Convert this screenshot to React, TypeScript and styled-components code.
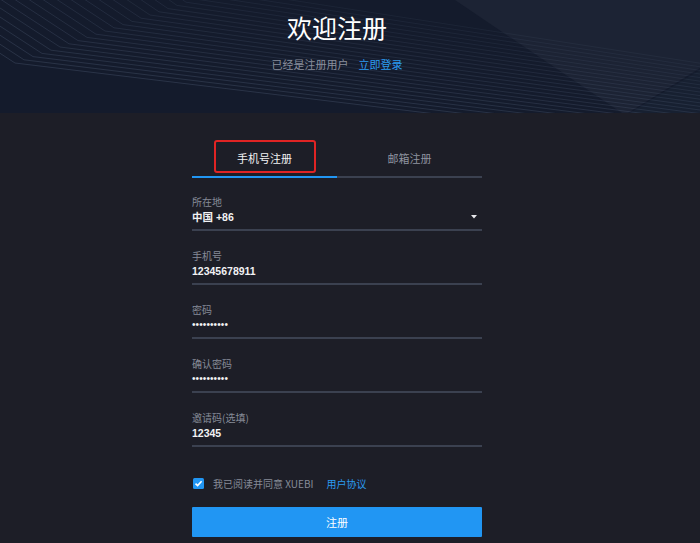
import { FC } from "react";
import styled, { createGlobalStyle } from "styled-components";

const GlobalStyle = createGlobalStyle`
  html, body {
    margin: 0;
    padding: 0;
    background: #1d1e27;
  }
  body {
    font-family: "Noto Sans CJK SC", "Noto Sans", "Liberation Sans", sans-serif;
  }
`;

interface IField {
  label: string;
  value: string;
  secret?: boolean;
  select?: boolean;
}

const fields: IField[] = [
  { label: "所在地", value: "中国 +86", select: true },
  { label: "手机号", value: "12345678911" },
  { label: "密码", value: "••••••••••", secret: true },
  { label: "确认密码", value: "••••••••••", secret: true },
  { label: "邀请码(选填)", value: "12345" },
];

const HeaderArt: FC = (): JSX.Element => {
  const lines = Array.from({ length: 24 }, (_, i) => i);
  return (
    <ArtSvg viewBox="0 0 700 113" preserveAspectRatio="none">
      <polygon points="455,0 700,0 700,68 628,113 622,113" fill="#1c2334" />
      <polygon points="700,70 630,113 700,113" fill="#172031" />
      {lines.map((i) => (
        <polyline
          key={i}
          points={`${-90 + i * 14},-5 ${15 + i * 9},${63 - i * 3.2} 700,${
            146 - i * 3.6
          }`}
          fill="none"
          stroke="#71829f"
          strokeOpacity={0.3 - i * 0.008}
          strokeWidth={0.8}
        />
      ))}
    </ArtSvg>
  );
};

const Caret: FC = (): JSX.Element => (
  <svg width="6" height="4" viewBox="0 0 6 4">
    <polygon points="0,0 6,0 3,3.5" fill="#e8e8ec" />
  </svg>
);

const CheckBox: FC = (): JSX.Element => (
  <svg width="11" height="11" viewBox="0 0 11 11">
    <rect x="0" y="0" width="11" height="11" rx="1.5" fill="#2196f3" />
    <polyline
      points="2.5,5.6 4.6,7.6 8.6,3.3"
      fill="none"
      stroke="#ffffff"
      strokeWidth="1.6"
    />
  </svg>
);

const FormField: FC<IField> = ({ label, value, secret, select }): JSX.Element => (
  <Field>
    <FieldLabel>{label}</FieldLabel>
    <FieldRow>
      <FieldValue secret={secret}>{value}</FieldValue>
      {select && <Caret />}
    </FieldRow>
  </Field>
);

const App: FC = (): JSX.Element => {
  return (
    <Page>
      <GlobalStyle />
      <Header>
        <HeaderArt />
        <Title>欢迎注册</Title>
        <SubLine>
          已经是注册用户
          <Link size={11} gap={10}>立即登录</Link>
        </SubLine>
      </Header>
      <Form>
        <Tabs>
          <Tab active>
            <TabLabel highlighted>手机号注册</TabLabel>
          </Tab>
          <Tab>
            <TabLabel>邮箱注册</TabLabel>
          </Tab>
        </Tabs>
        <FieldList>
          {fields.map((f) => (
            <FormField key={f.label} {...f} />
          ))}
        </FieldList>
        <Agree>
          <CheckBox />
          <AgreeText>我已阅读并同意 XUEBI</AgreeText>
          <Link size={10} gap={13}>用户协议</Link>
        </Agree>
        <SubmitButton>注册</SubmitButton>
      </Form>
    </Page>
  );
};

export default App;

const Page = styled.div`
  width: 700px;
  height: 543px;
  overflow: hidden;
  background: #1d1e27;
`;

const Header = styled.header`
  position: relative;
  box-sizing: border-box;
  height: 113px;
  padding-right: 26px;
  background: #141b2c;
  display: flex;
  flex-direction: column;
  align-items: center;
  overflow: hidden;
`;

const ArtSvg = styled.svg`
  position: absolute;
  inset: 0;
  width: 100%;
  height: 100%;
`;

const Title = styled.h1`
  position: relative;
  margin: 9px 0 0;
  font-size: 25px;
  line-height: 36px;
  font-weight: 400;
  color: #ffffff;
`;

const SubLine = styled.div`
  position: relative;
  margin-top: 11px;
  font-size: 11px;
  line-height: 16px;
  color: #8a8f9c;
`;

const Link = styled.span<{ size: number; gap: number }>`
  color: #2b9af0;
  margin-left: ${(p) => p.gap}px;
  font-size: ${(p) => p.size}px;
`;

const Form = styled.main`
  width: 290px;
  margin-left: 192px;
  padding-top: 27px;
  display: flex;
  flex-direction: column;
`;

const Tabs = styled.div`
  display: flex;
  border-bottom: 2px solid #3b4150;
`;

const Tab = styled.div<{ active?: boolean }>`
  flex: 1;
  display: flex;
  justify-content: center;
  padding-bottom: 3px;
  margin-bottom: -2px;
  border-bottom: 2px solid ${(p) => (p.active ? "#2196f3" : "transparent")};
`;

const TabLabel = styled.div<{ highlighted?: boolean }>`
  box-sizing: border-box;
  height: 33px;
  width: 102px;
  display: flex;
  align-items: center;
  justify-content: center;
  padding-top: 3px;
  font-size: 11px;
  color: ${(p) => (p.highlighted ? "#f2f2f4" : "#8f94a0")};
  border: 2px solid ${(p) => (p.highlighted ? "#e02424" : "transparent")};
  border-radius: 3px;
`;

const FieldList = styled.div`
  display: flex;
  flex-direction: column;
  gap: 18px;
  margin-top: 17px;
`;

const Field = styled.div`
  display: flex;
  flex-direction: column;
  border-bottom: 2px solid #3b4150;
  padding-bottom: 4px;
`;

const FieldLabel = styled.div`
  font-size: 10px;
  line-height: 14px;
  color: #868b97;
`;

const FieldRow = styled.div`
  display: flex;
  align-items: center;
  justify-content: space-between;
  padding-right: 5px;
`;

const FieldValue = styled.div<{ secret?: boolean }>`
  height: 16px;
  font-family: "Liberation Sans", "Noto Sans CJK SC", sans-serif;
  font-size: ${(p) => (p.secret ? "10px" : "10.5px")};
  font-weight: ${(p) => (p.secret ? 400 : 700)};
  line-height: 16px;
  letter-spacing: ${(p) => (p.secret ? "0.1px" : "0")};
  color: #f2f2f4;
`;

const Agree = styled.div`
  display: flex;
  align-items: center;
  margin-top: 29px;
  padding-left: 1px;
`;

const AgreeText = styled.span`
  margin-left: 9px;
  font-size: 10px;
  line-height: 14px;
  color: #868b97;
`;

const SubmitButton = styled.button`
  margin-top: 16px;
  height: 30px;
  border: none;
  border-radius: 1px;
  background: #2196f3;
  color: #ffffff;
  font-family: "Noto Sans CJK SC", sans-serif;
  font-size: 11px;
  padding: 0;
`;
